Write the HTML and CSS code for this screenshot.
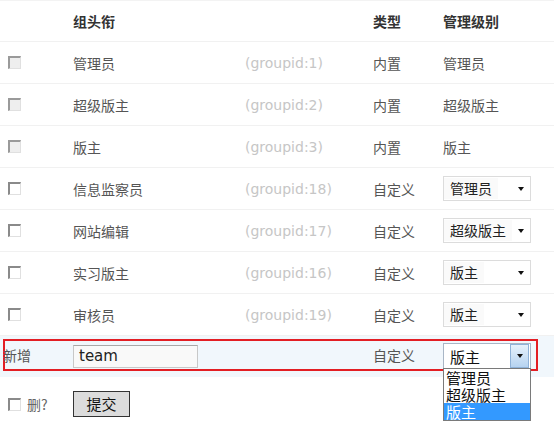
FILE: index.html
```html
<!DOCTYPE html>
<html>
<head>
<meta charset="utf-8">
<link rel="stylesheet" href="styles.css">
</head>
<body>
<div class="table">
  <div class="row head">
    <div></div>
    <div>组头衔</div>
    <div></div>
    <div>类型</div>
    <div>管理级别</div>
  </div>
  <div class="row">
    <div><span class="cb disabled"></span></div>
    <div class="name">管理员</div>
    <div class="gid">(groupid:1)</div>
    <div class="type">内置</div>
    <div class="type">管理员</div>
  </div>
  <div class="row">
    <div><span class="cb disabled"></span></div>
    <div class="name">超级版主</div>
    <div class="gid">(groupid:2)</div>
    <div class="type">内置</div>
    <div class="type">超级版主</div>
  </div>
  <div class="row">
    <div><span class="cb disabled"></span></div>
    <div class="name">版主</div>
    <div class="gid">(groupid:3)</div>
    <div class="type">内置</div>
    <div class="type">版主</div>
  </div>
  <div class="row">
    <div><span class="cb"></span></div>
    <div class="name">信息监察员</div>
    <div class="gid">(groupid:18)</div>
    <div class="type">自定义</div>
    <div><span class="sel"><span class="val">管理员</span><span class="arrow"></span></span></div>
  </div>
  <div class="row">
    <div><span class="cb"></span></div>
    <div class="name">网站编辑</div>
    <div class="gid">(groupid:17)</div>
    <div class="type">自定义</div>
    <div><span class="sel"><span class="val">超级版主</span><span class="arrow"></span></span></div>
  </div>
  <div class="row">
    <div><span class="cb"></span></div>
    <div class="name">实习版主</div>
    <div class="gid">(groupid:16)</div>
    <div class="type">自定义</div>
    <div><span class="sel"><span class="val">版主</span><span class="arrow"></span></span></div>
  </div>
  <div class="row">
    <div><span class="cb"></span></div>
    <div class="name">审核员</div>
    <div class="gid">(groupid:19)</div>
    <div class="type">自定义</div>
    <div><span class="sel"><span class="val">版主</span><span class="arrow"></span></span></div>
  </div>
  <div class="newwrap">
    <div class="newrow">
      <div class="newlabel">新增</div>
      <div><span class="input">team</span></div>
      <div></div>
      <div class="type">自定义</div>
      <div class="opencell">
        <span class="sel open"><span class="val">版主</span><span class="btn"><span class="arrow"></span></span></span>
        <div class="list">
          <div class="opt">管理员</div>
          <div class="opt">超级版主</div>
          <div class="opt on">版主</div>
        </div>
      </div>
    </div>
  </div>
  <div class="foot">
    <div class="del"><span class="cb"></span><span class="dlabel">删?</span></div>
    <div><span class="submit">提交</span></div>
  </div>
</div>
</body>
</html>
```

FILE: styles.css
```css
html, body {
  margin: 0;
  padding: 0;
  background: #ffffff;
}
body {
  font-family: "Noto Sans CJK SC", "DejaVu Sans", sans-serif;
  font-size: 14px;
  color: #555;
  min-height: 430px;
}
.table {
  width: 554px;
}
.row {
  display: grid;
  grid-template-columns: 73px 172px 128px 70px 1fr;
  align-items: center;
  height: 41px;
  border-bottom: 1px solid #f1f1f1;
}
.row.head {
  font-weight: bold;
  color: #333;
  border-top: 1px solid #f3f3f3;
  height: 40px;
}
.cb {
  display: block;
  margin-left: 8px;
  border-top: 2px solid #8a8a8a;
  border-left: 2px solid #8a8a8a;
  border-right: 1px solid #e0e0e0;
  border-bottom: 1px solid #e0e0e0;
  background: #fff;
  box-sizing: content-box;
  width: 10px;
  height: 10px;
}
.cb.disabled {
  background: #eeeeee;
  border-top-color: #9a9a9a;
  border-left-color: #9a9a9a;
}
.name, .type {
  color: #555;
}
.gid {
  font-family: "DejaVu Sans", sans-serif;
  font-size: 14px;
  color: #c6c6c6;
}
.sel {
  display: flex;
  align-items: center;
  justify-content: space-between;
  width: 86px;
  height: 23px;
  border: 1px solid #dcdcdc;
  background: #fff;
  box-sizing: content-box;
  color: #222;
}
.sel .val {
  padding-left: 6px;
  padding-right: 6px;
  background: #fafafa;
  line-height: 21px;
}
.arrow {
  width: 0;
  height: 0;
  margin-right: 6px;
  border-left: 3px solid transparent;
  border-right: 3px solid transparent;
  border-top: 4px solid #111;
}
.newwrap {
  background: #f1f7fc;
  padding: 3px 0 6px 0;
}
.newrow {
  display: grid;
  grid-template-columns: 68px 172px 128px 70px 1fr;
  align-items: center;
  margin-left: 3px;
  width: 535px;
  height: 32px;
  border: 2px solid #e31e24;
  box-sizing: border-box;
}
.newlabel {
  color: #555;
  margin-left: -2px;
}
.input {
  display: block;
  width: 118px;
  height: 21px;
  border: 1px solid #c8c8c8;
  border-top-color: #a8a8a8;
  background: #f9f9f9;
  font-family: "DejaVu Sans", sans-serif;
  font-size: 15px;
  line-height: 21px;
  color: #222;
  padding-left: 5px;
  margin-top: 2px;
}
.opencell {
  position: relative;
  height: 28px;
}
.sel.open {
  position: absolute;
  top: 2px;
  left: 0;
  height: 24px;
  border: 1px solid #a9b6c6;
  background: #fff;
}
.sel.open .val {
  background: #fff;
  font-size: 15px;
  color: #111;
}
.btn {
  display: flex;
  align-items: center;
  justify-content: center;
  width: 17px;
  height: 22px;
  margin-right: 1px;
  background: linear-gradient(#e6f1fb, #b6d3f0);
  border: 1px solid #8fb2d8;
}
.btn .arrow {
  margin-right: 0;
}
.list {
  position: absolute;
  top: 27px;
  left: 0;
  width: 86px;
  border: 1px solid #7a7a7a;
  background: #fff;
  z-index: 2;
}
.opt {
  font-size: 15px;
  line-height: 17px;
  height: 17px;
  color: #111;
  padding-left: 2px;
}
.opt.on {
  background: #3399ff;
  color: #fff;
}
.foot {
  display: grid;
  grid-template-columns: 73px 1fr;
  align-items: center;
  padding-top: 13px;
  height: 28px;
}
.del {
  display: flex;
  align-items: center;
}
.dlabel {
  margin-left: 6px;
  color: #666;
}
.submit {
  display: inline-block;
  width: 55px;
  height: 24px;
  border: 1px solid #333;
  background: #dcdcdc;
  font-size: 15px;
  color: #111;
  text-align: center;
  line-height: 24px;
}
```
